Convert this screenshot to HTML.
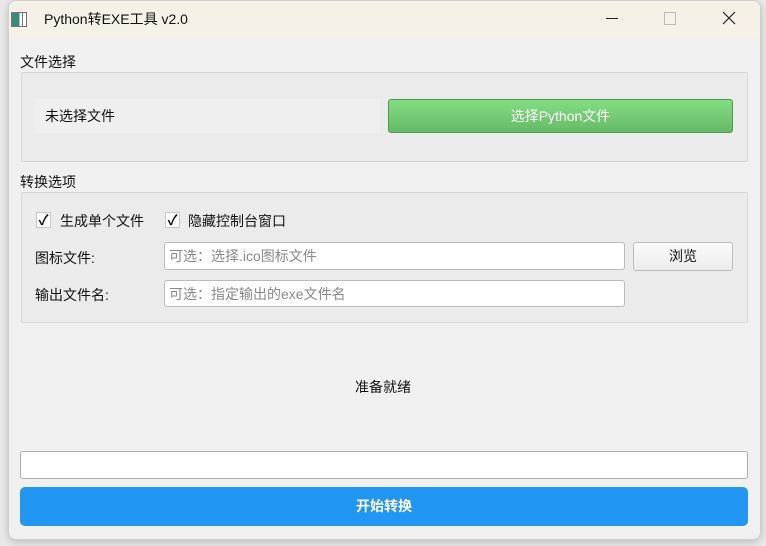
<!DOCTYPE html>
<html><head><meta charset="utf-8"><style>
body{margin:0;width:766px;height:546px;background:#e9e9e9;position:relative;overflow:hidden;font-family:"Liberation Sans","Noto Sans CJK SC",sans-serif;font-size:14px;color:#111}
.a{position:absolute}
.win{left:8px;top:0;width:751px;height:538px;background:#f0f0f0;border:1px solid #cfcfcf;border-radius:8px;overflow:hidden;box-shadow:0 2px 8px rgba(0,0,0,.2)}
.tb{left:0;top:0;width:751px;height:37px;background:#f6f1e7}
.grp{border:1px solid #d6d6d6;background:#ebebeb;border-radius:2px}
.inp{background:#fff;border:1px solid #bcbcbc;border-radius:3px;box-sizing:border-box;color:#8a8a8a;padding-left:4px;line-height:26px}
.cb{width:15px;height:16px;border:1px solid #c8c8c8;background:#fff;box-sizing:border-box;font-size:14px;line-height:15px;text-align:center;font-weight:bold}
</style></head><body>
<div class="a win">
 <div class="a tb"></div>
</div>
<div class="a" style="left:11px;top:12px;width:14px;height:13px;border:1px solid #777;background:linear-gradient(90deg,#3a8a7a 0 55%,#fff 55% 70%,#5a7aa0 70% 80%,#fff 80%)"></div>
<div class="a" style="left:44px;top:9px;font-size:14px">Python转EXE工具 v2.0</div>
<div class="a" style="left:606px;top:18px;width:12px;height:1px;background:#222"></div>
<div class="a" style="left:664px;top:12px;width:10px;height:11px;border:1px solid #bbb"></div>
<svg class="a" style="left:722px;top:11px" width="14" height="14"><path d="M1 1L13 13M13 1L1 13" stroke="#222" stroke-width="1.2"/></svg>

<div class="a" style="left:20px;top:52px">文件选择</div>
<div class="a grp" style="left:21px;top:72px;width:725px;height:88px"></div>
<div class="a" style="left:35px;top:99px;width:345px;height:34px;background:#efefef;line-height:34px;padding-left:10px;box-sizing:border-box">未选择文件</div>
<div class="a" style="left:388px;top:99px;width:345px;height:34px;box-sizing:border-box;border:1px solid #4f9a4f;border-radius:3px;background:linear-gradient(#82dd82,#66bb66);color:#fff;text-align:center;line-height:32px">选择Python文件</div>

<div class="a" style="left:20px;top:172px">转换选项</div>
<div class="a grp" style="left:21px;top:192px;width:725px;height:129px"></div>
<div class="a cb" style="left:36px;top:212px">✓</div>
<div class="a" style="left:60px;top:211px">生成单个文件</div>
<div class="a cb" style="left:165px;top:212px">✓</div>
<div class="a" style="left:188px;top:211px">隐藏控制台窗口</div>
<div class="a" style="left:35px;top:248px">图标文件:</div>
<div class="a inp" style="left:164px;top:242px;width:461px;height:28px">可选：选择.ico图标文件</div>
<div class="a" style="left:633px;top:242px;width:100px;height:29px;box-sizing:border-box;border:1px solid #bdbdbd;border-radius:3px;background:linear-gradient(#fafafa,#ececec);text-align:center;line-height:27px">浏览</div>
<div class="a" style="left:35px;top:285px">输出文件名:</div>
<div class="a inp" style="left:164px;top:280px;width:461px;height:27px">可选：指定输出的exe文件名</div>

<div class="a" style="left:0;width:766px;top:377px;text-align:center">准备就绪</div>
<div class="a" style="left:20px;top:451px;width:728px;height:28px;box-sizing:border-box;background:#fff;border:1px solid #adadad;border-radius:3px"></div>
<div class="a" style="left:20px;top:487px;width:728px;height:39px;background:#2196f3;border-radius:5px;color:#fff;font-weight:bold;text-align:center;line-height:39px">开始转换</div>
</body></html>
